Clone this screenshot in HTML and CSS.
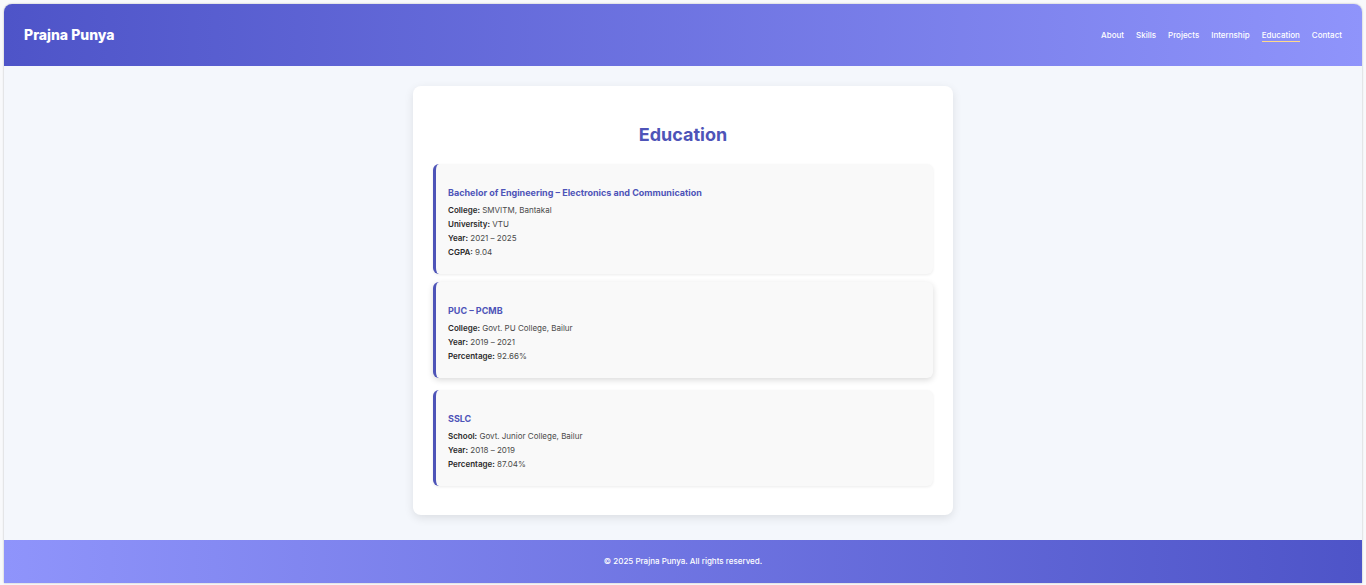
FILE: index.html
```html
<!DOCTYPE html>
<html lang="en">
<head>
<meta charset="utf-8">
<meta name="viewport" content="width=device-width, initial-scale=1">
<title>Education | Prajna Punya</title>
<link rel="stylesheet" href="styles.css">
</head>
<body>
<div class="page">
  <header class="site-header">
    <div class="brand">Prajna Punya</div>
    <nav class="site-nav" aria-label="Main">
      <a href="#about">About</a>
      <a href="#skills">Skills</a>
      <a href="#projects">Projects</a>
      <a href="#internship">Internship</a>
      <a class="current" href="#education" aria-current="page">Education</a>
      <a href="#contact">Contact</a>
    </nav>
  </header>
  <main class="content">
    <section class="panel" id="education">
      <h1 class="panel-title">Education</h1>
      <div class="entries">
        <article class="entry">
          <h2 class="entry-title">Bachelor of Engineering – Electronics and Communication</h2>
          <p><strong>College:</strong> SMVITM, Bantakal</p>
          <p><strong>University:</strong> VTU</p>
          <p><strong>Year:</strong> 2021 – 2025</p>
          <p><strong>CGPA:</strong> 9.04</p>
        </article>
        <article class="entry raised">
          <h2 class="entry-title">PUC – PCMB</h2>
          <p><strong>College:</strong> Govt. PU College, Bailur</p>
          <p><strong>Year:</strong> 2019 – 2021</p>
          <p><strong>Percentage:</strong> 92.66%</p>
        </article>
        <article class="entry">
          <h2 class="entry-title">SSLC</h2>
          <p><strong>School:</strong> Govt. Junior College, Bailur</p>
          <p><strong>Year:</strong> 2018 – 2019</p>
          <p><strong>Percentage:</strong> 87.04%</p>
        </article>
      </div>
    </section>
  </main>
  <footer class="site-footer">© 2025 Prajna Punya. All rights reserved.</footer>
</div>
</body>
</html>
```
FILE: styles.css
```css
* {
  box-sizing: border-box;
}

body {
  margin: 0;
  padding: 4px 4px 2px;
  background: #f8f9fb;
  color: #4a4a4a;
  font-family: Inter, "Liberation Sans", sans-serif;
  font-size: 8px;
  line-height: 14px;
}

.page {
  display: flex;
  flex-direction: column;
  min-height: calc(100vh - 6px);
  background: #f4f7fc;
  border-radius: 8px 8px 0 0;
  box-shadow: 0 0 2px rgba(0, 0, 0, 0.3);
  overflow: hidden;
}

.site-header {
  display: flex;
  align-items: center;
  justify-content: space-between;
  padding: 20px;
  background: linear-gradient(90deg, #4e54c8, #8f94fb);
  color: #fff;
}

.brand {
  font-size: 14px;
  font-weight: 800;
  line-height: 22px;
}

.site-nav {
  display: flex;
  gap: 12px;
}

.site-nav a {
  border-bottom: 1px solid transparent;
  color: #fff;
  font-weight: 500;
  line-height: 12px;
  text-decoration: none;
}

.site-nav .current {
  border-bottom-color: #ffd98a;
}

.content {
  flex: 1;
  padding: 20px 20px 25px;
}

.panel {
  max-width: 540px;
  margin: 0 auto;
  padding: 37px 20px 29px;
  background: #fff;
  border-radius: 8px;
  box-shadow: 0 3px 10px rgba(0, 0, 0, 0.1);
}

.panel-title {
  margin: 0 0 17px;
  color: #4e54b8;
  font-size: 18px;
  font-weight: 700;
  line-height: 24px;
  text-align: center;
}

.entries {
  display: grid;
  gap: 10px;
}

.entry {
  padding: 21px 12px 15px;
  background: #f9f9f9;
  border-left: 3px solid #4e54b8;
  border-radius: 6px;
  box-shadow: 0 1px 3px rgba(0, 0, 0, 0.08);
}

.entry.raised {
  box-shadow: 0 2px 6px rgba(0, 0, 0, 0.15);
  transform: translateY(-2px);
}

.entry-title {
  margin: 0 0 2px;
  color: #4e54b8;
  font-size: 9px;
  font-weight: 700;
  line-height: 16px;
}

.entry p {
  margin: 0;
}

.entry strong {
  color: #2a2a2a;
  font-weight: 600;
}

.site-footer {
  padding: 14px 20px 15px;
  background: linear-gradient(90deg, #8f94fb, #4e54c8);
  color: #fff;
  font-weight: 500;
  text-align: center;
}
```
